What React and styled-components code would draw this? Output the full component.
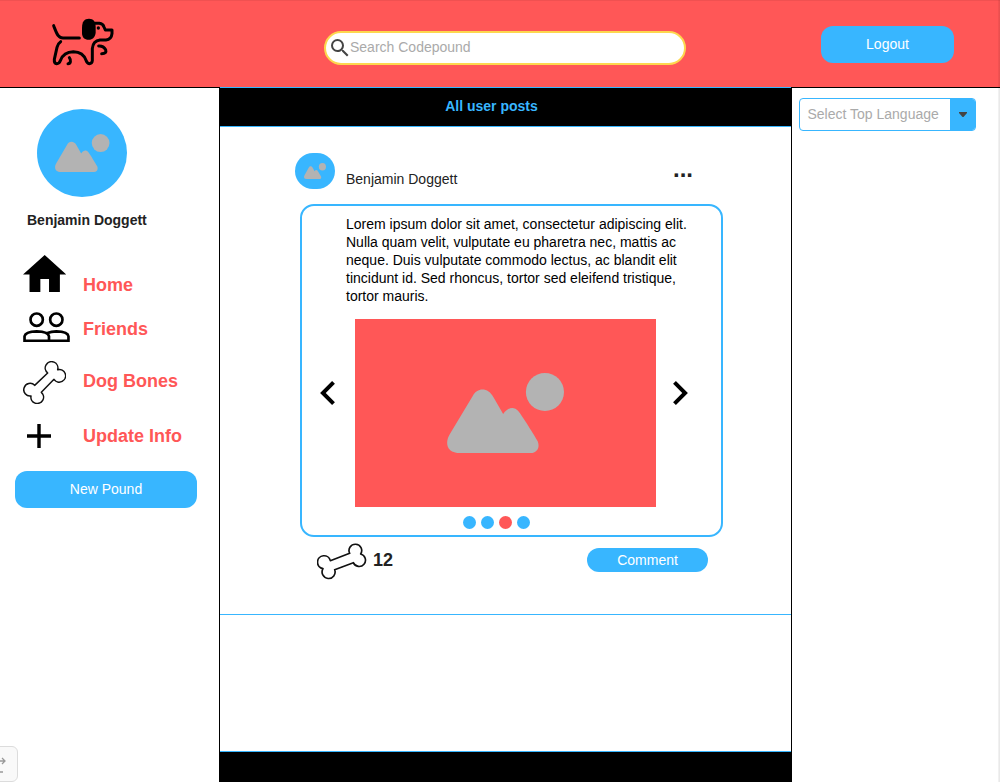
import React from "react";
import styled, { createGlobalStyle } from "styled-components";

const blue = "#38b6ff";
const coral = "#ff5757";

const GlobalStyle = createGlobalStyle`
  * { box-sizing: border-box; }
  body {
    margin: 0;
    background: #fff;
    font-family: "Liberation Sans", Arial, sans-serif;
    font-size: 14px;
    line-height: 18px;
    color: #222;
  }
  svg { display: block; flex: none; }
  button { font-family: inherit; }
`;

const Page = styled.div`
  position: relative;
  display: flex;
  flex-direction: column;
  width: 1000px;
  height: 782px;
  overflow: hidden;

  &::after {
    content: "";
    position: absolute;
    top: 0;
    right: 0;
    bottom: 0;
    width: 2px;
    background: linear-gradient(to right, rgba(0, 0, 0, 0.04), rgba(0, 0, 0, 0.1));
  }
`;

const Header = styled.header`
  display: flex;
  align-items: flex-start;
  flex: none;
  height: 88px;
  background: ${coral};
  border-bottom: 1px solid #000;
  box-shadow: inset 0 1px 0 rgba(0, 0, 0, 0.06);
`;

const Logo = styled.div`
  width: 324px;
  padding: 8px 0 0 40px;
`;

const SearchBox = styled.label`
  display: flex;
  align-items: center;
  width: 362px;
  height: 34px;
  margin-top: 31px;
  padding-left: 2px;
  background: #fff;
  border: 2px solid #fdd74e;
  border-radius: 17px;
`;

const Placeholder = styled.span`
  color: #aaa;
  padding: ${(p) => p.$pad || "0"};
  margin-left: ${(p) => p.$shift || 0}px;
`;

const Button = styled.button`
  width: ${(p) => p.$w}px;
  height: ${(p) => p.$h}px;
  margin: ${(p) => p.$m || "0"};
  padding: 0 0 ${(p) => p.$lift || 0}px;
  border: 0;
  border-radius: 12px;
  background: ${blue};
  color: #fff;
  font-size: 14px;
  line-height: 18px;
`;

const Columns = styled.div`
  display: flex;
  flex: 1;
`;

const Sidebar = styled.aside`
  width: 220px;
  border-right: 1px solid #000;
  padding-top: 21px;
`;

const Avatar = styled.div`
  display: flex;
  width: ${(p) => p.$w}px;
  height: ${(p) => p.$h}px;
  margin: ${(p) => p.$m || "0"};
  padding: ${(p) => p.$pad};
  border-radius: ${(p) => p.$r};
  background: ${blue};
`;

const UserName = styled.div`
  margin: 14px 0 0 27px;
  font-weight: 700;
`;

const Nav = styled.nav`
  margin-top: 26px;
`;

const NavItem = styled.a`
  display: flex;
  height: ${(p) => p.$h}px;
`;

const NavIcon = styled.span`
  width: 83px;
  padding: ${(p) => p.$pad};
`;

const NavLabel = styled.span`
  margin-top: ${(p) => p.$top}px;
  color: ${coral};
  font-size: 18px;
  line-height: 20px;
  font-weight: 700;
`;

const Feed = styled.main`
  display: flex;
  flex-direction: column;
  position: relative;
  width: 571px;
  margin-top: -1px;
  border-top: 1px solid ${blue};
`;

const FeedTitle = styled.h1`
  flex: none;
  height: 39px;
  margin: 0;
  padding: 9px 28px 0 0;
  background: #000;
  border-bottom: 1px solid ${blue};
  color: ${blue};
  font-size: 14px;
  line-height: 18px;
  text-align: center;
`;

const Post = styled.article`
  flex: none;
  height: 488px;
  padding-top: 26px;
  border-bottom: 1px solid ${blue};
`;

const PostHeader = styled.div`
  display: flex;
  height: 51px;
  padding-left: 75px;
`;

const Author = styled.span`
  width: 327px;
  margin: 17px 0 0 11px;
`;

const More = styled.span`
  margin-top: 2px;
  font-size: 24px;
  line-height: 28px;
  font-weight: 700;
`;

const Card = styled.div`
  width: 423px;
  height: 333px;
  margin-left: 80px;
  border: 2px solid ${blue};
  border-radius: 14px;
`;

const PostText = styled.p`
  width: 346px;
  margin: 9px 0 0 44px;
  color: #000;
`;

const Carousel = styled.div`
  display: flex;
  align-items: flex-start;
  margin: 14px 0 0 18px;
`;

const Arrow = styled.span`
  padding-top: 62px;
`;

const Picture = styled.div`
  width: 301px;
  height: 188px;
  margin: 0 17px 0 20px;
  padding: 54px 0 0 92px;
  background: ${coral};
`;

const Dots = styled.div`
  display: flex;
  gap: 5px;
  margin: 9px 0 0 161px;
`;

const Dot = styled.i`
  width: 13px;
  height: 13px;
  border-radius: 50%;
  background: ${(p) => (p.$active ? coral : blue)};
`;

const PostFooter = styled.div`
  display: flex;
  padding: 6px 0 0 97px;
`;

const Count = styled.span`
  width: 214px;
  margin: 7px 0 0 6px;
  font-size: 18px;
  line-height: 20px;
  font-weight: 700;
`;

const FeedFooter = styled.footer`
  height: 31px;
  margin-top: auto;
  background: #000;
  border-top: 1px solid ${blue};
`;

const Aside = styled.aside`
  flex: 1;
  border-left: 1px solid #000;
  padding: 10px 0 0 7px;
`;

const Select = styled.div`
  display: flex;
  width: 177px;
  height: 33px;
  overflow: hidden;
  border: 1px solid ${blue};
  border-radius: 4px;
`;

const SelectToggle = styled.span`
  display: flex;
  align-items: center;
  width: 25px;
  margin-left: auto;
  padding-left: 9px;
  background: ${blue};
`;

const CornerTab = styled.div`
  position: absolute;
  left: -18px;
  bottom: 0;
  width: 36px;
  height: 36px;
  padding: 10px 0 0 17px;
  border: 1px solid #dcdcdc;
  border-radius: 6px;
  background: #f9f9f9;
`;

const DogIcon = () => (
  <svg width="90" height="70" viewBox="0 0 270 210" fill="none" stroke="#000" strokeWidth="9" strokeLinecap="round" strokeLinejoin="round">
    <path d="M41 53C46 66 49 76 55 83Q60 90 69 90H118" />
    <path d="M162 46H178Q189 47 192 57L196 66H216V77Q214 95 198 96H180Q159 98 157 122V158Q156 167 148 167Q141 166 138 157Q130 132 100 131Q71 132 62 156Q58 167 50 167Q42 166 43 154L51 118Q54 106 62 101" />
    <path d="M176 114Q190 113 197 125Q201 137 185 137M88 149C94 157 92 167 84 167" />
    <path d="M126 60C126 41 133 32 147 32C161 32 167 41 167 58V74C165 88 158 95 146 95C133 95 126 88 126 74Z" fill="#000" stroke="none" />
    <circle cx="175" cy="60" r="5" fill="#000" stroke="none" />
  </svg>
);

const PictureIcon = ({ width, height }) => (
  <svg width={width} height={height} viewBox="442 189 350 240" preserveAspectRatio="none" fill="#b3b3b3">
    <path d="M482 429H692C712 429 721 412 713 393C706 380 666 316 655 303C643 289 626 290 610 312L581 262C566 231 532 231 519 258L452 370C434 398 440 429 482 429Z" />
    <circle cx="735" cy="246" r="57" />
  </svg>
);

const SearchIcon = () => (
  <svg width="24" height="24" viewBox="0 0 24 24" fill="#444">
    <path d="M15.5 14h-.79l-.28-.27A6.47 6.47 0 0 0 16 9.5 6.5 6.5 0 1 0 9.5 16c1.61 0 3.09-.59 4.23-1.57l.27.28v.79l5 4.99L20.49 19l-4.99-5zm-6 0C7.01 14 5 11.99 5 9.5S7.01 5 9.5 5 14 7.01 14 9.5 11.99 14 9.5 14z" />
  </svg>
);

const HomeIcon = () => (
  <svg width="43.4" height="37" viewBox="2 3 20 17">
    <path d="M10 20v-6h4v6h5v-8h3L12 3 2 12h3v8z" />
  </svg>
);

const FriendsIcon = () => (
  <svg width="47" height="30.300" viewBox="39 200 141 91" fill="none" stroke="#000" strokeWidth="8">
    <circle cx="80" cy="223" r="18.500" />
    <circle cx="139" cy="223" r="18.500" />
    <path d="M43.500 286.500V273Q46 259 80 258Q115 259 117 273V286.500ZM117 286.500H175.500V273Q174 259 139 258Q125 258 110 264" />
  </svg>
);

const SteepBoneIcon = () => (
  <svg width="43" height="43" viewBox="38 34 129 129" fill="none" stroke="#111" strokeWidth="4.500" strokeLinejoin="round">
    <path d="M112 70A19 19 0 1 1 142 60A19 19 0 1 1 131 89L93 128A19 19 0 1 1 62 139A19 19 0 1 1 73 107Z" />
  </svg>
);

const BoneIcon = () => (
  <svg width="50" height="38" viewBox="81 24 150 114" fill="none" stroke="#111" strokeWidth="5" strokeLinejoin="round">
    <path d="M179 55A19 19 0 1 1 212 57A19 19 0 1 1 190 83L134 104A19.500 19.500 0 1 1 99 101A19.500 19.500 0 1 1 121 77Z" />
  </svg>
);

const PlusIcon = () => (
  <svg width="24" height="24" viewBox="5 5 14 14">
    <path d="M19 13h-6v6h-2v-6H5v-2h6V5h2v6h6v2z" />
  </svg>
);

const Chevron = ({ next }) => (
  <svg width="15" height="24" viewBox={next ? "8.590 6 7.410 12" : "8 6 7.410 12"}>
    <path d={next ? "M10 6L8.590 7.410 13.170 12l-4.580 4.590L10 18l6-6z" : "M15.410 7.410L14 6l-6 6 6 6 1.410-1.410L10.830 12z"} />
  </svg>
);

export default function App() {
  return (
    <Page>
      <GlobalStyle />
      <Header>
        <Logo><DogIcon /></Logo>
        <SearchBox>
          <SearchIcon />
          <Placeholder $pad="0 0 2px" $shift={-2}>Search Codepound</Placeholder>
        </SearchBox>
        <Button $w={133} $h={37} $m="26px 0 0 135px" $lift={2}>Logout</Button>
      </Header>
      <Columns>
        <Sidebar>
          <Avatar $w={90} $h={88} $m="0 0 0 37px" $pad="25px 0 0 18px" $r="50%">
            <PictureIcon width={54.500} height={38} />
          </Avatar>
          <UserName>Benjamin Doggett</UserName>
          <Nav>
            <NavItem $h={56}>
              <NavIcon $pad="0 0 0 23px"><HomeIcon /></NavIcon>
              <NavLabel $top={20}>Home</NavLabel>
            </NavItem>
            <NavItem $h={50}>
              <NavIcon $pad="1px 0 0 23px"><FriendsIcon /></NavIcon>
              <NavLabel $top={8}>Friends</NavLabel>
            </NavItem>
            <NavItem $h={62}>
              <NavIcon $pad="0 0 0 22.500px"><SteepBoneIcon /></NavIcon>
              <NavLabel $top={10}>Dog Bones</NavLabel>
            </NavItem>
            <NavItem $h={48}>
              <NavIcon $pad="1px 0 0 27px"><PlusIcon /></NavIcon>
              <NavLabel $top={3}>Update Info</NavLabel>
            </NavItem>
          </Nav>
          <Button $w={182} $h={37} $m="0 0 0 15px" $lift={2}>New Pound</Button>
        </Sidebar>
        <Feed>
          <FeedTitle>All user posts</FeedTitle>
          <Post>
            <PostHeader>
              <Avatar $w={40} $h={36} $pad="10px 0 0 9px" $r="18px">
                <PictureIcon width={22} height={16} />
              </Avatar>
              <Author>Benjamin Doggett</Author>
              <More>...</More>
            </PostHeader>
            <Card>
              <PostText>
                Lorem ipsum dolor sit amet, consectetur adipiscing elit. Nulla quam velit, vulputate eu
                pharetra nec, mattis ac neque. Duis vulputate commodo lectus, ac blandit elit tincidunt
                id. Sed rhoncus, tortor sed eleifend tristique, tortor mauris.
              </PostText>
              <Carousel>
                <Arrow><Chevron /></Arrow>
                <Picture><PictureIcon width={117} height={80} /></Picture>
                <Arrow><Chevron next /></Arrow>
              </Carousel>
              <Dots>
                <Dot /><Dot /><Dot $active /><Dot />
              </Dots>
            </Card>
            <PostFooter>
              <BoneIcon />
              <Count>12</Count>
              <Button $w={121} $h={24} $m="5px 0 0">Comment</Button>
            </PostFooter>
          </Post>
          <FeedFooter />
        </Feed>
        <Aside>
          <Select>
            <Placeholder $pad="6px 0 0 7.500px">Select Top Language</Placeholder>
            <SelectToggle>
              <svg width="8" height="5" viewBox="0 0 8 5" fill="#444"><path d="M0 0H8V1L4.500 5H3.500L0 1Z" /></svg>
            </SelectToggle>
          </Select>
        </Aside>
      </Columns>
      <CornerTab>
        <svg width="7" height="16" viewBox="0 0 7 16" fill="none" stroke="#999" strokeWidth="1.300">
          <path d="M0 4H5M2 1L5 4L2 7M0 15H3" />
        </svg>
      </CornerTab>
    </Page>
  );
}
